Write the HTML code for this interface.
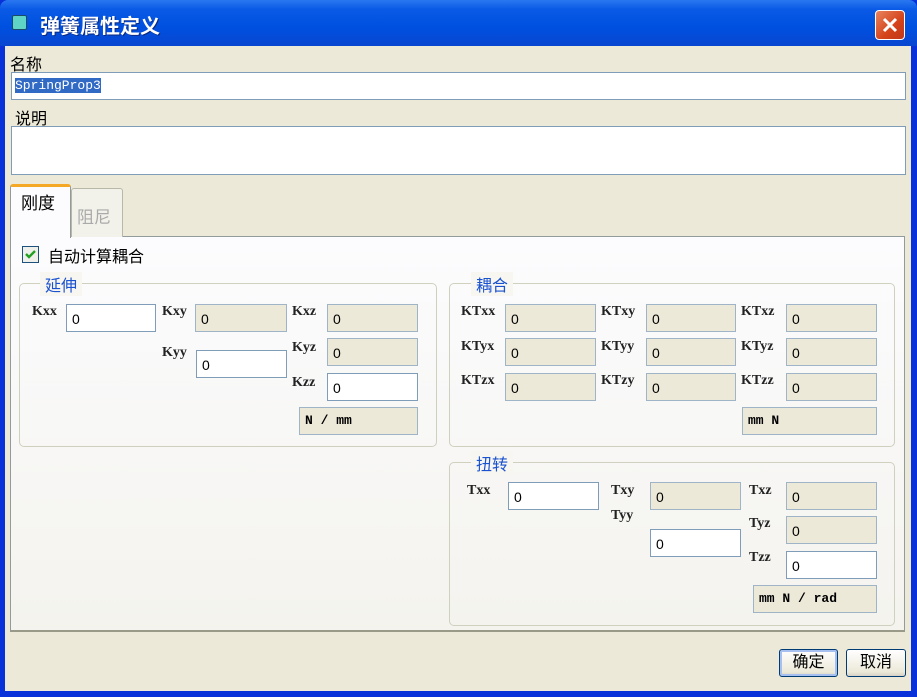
<!DOCTYPE html>
<html><head><meta charset="utf-8"><style>
*{margin:0;padding:0;box-sizing:border-box}
body{width:917px;height:697px;overflow:hidden;background:#0831d9;font-family:"Liberation Sans","Noto Sans CJK SC",sans-serif;position:relative}
.a{position:absolute}
#title{left:0;top:0;width:917px;height:46px;background:linear-gradient(#2a78f0,#0a5ae6 20%,#0050e0 60%,#0846d0);border-radius:8px 8px 0 0}
#client{left:5px;top:46px;width:906px;height:645px;background:#ece9d8}
.lbl{font-size:16px;color:#000}
.in{border:1px solid #7f9db9;background:#fff;font-size:14px;padding-left:5px;padding-top:2px;line-height:25px}
.g{background:#ece9d8;border-color:#a0b4c8}
.kl{font-family:"Liberation Serif",serif;font-weight:bold;font-size:14px;color:#222}
.grp{border:1px solid #d0d0bf;border-radius:5px}
.gt{color:#1a52d0;font-size:16px;background:#f7f6f1;padding:0 5px}
.u{font-family:"Liberation Mono",monospace;font-weight:bold;font-size:13px;border:1px solid #a0b4c8;background:#ece9d8;padding-left:5px;line-height:26px}
.btn{border:1px solid #003c74;border-radius:3px;background:linear-gradient(#fff,#ece9d8 85%,#d6d0c5);font-size:16px;text-align:center;line-height:25px}
</style></head><body>
<div id="title" class="a"></div>
<div class="a" style="left:12px;top:15px;width:15px;height:15px;background:#5fd3c6;border:1px solid #1a4a6a;border-radius:2px"></div>
<div class="a" style="left:40px;top:10px;color:#fff;font-size:20px;font-weight:bold;text-shadow:1px 1px 0 #0a2a80">弹簧属性定义</div>
<div class="a" style="left:875px;top:10px;width:30px;height:30px;border:1px solid #fff;border-radius:4px;background:linear-gradient(135deg,#e8845f,#d4431a 60%,#c0381a)"><svg width="28" height="28"><path d="M8 8L20 20M20 8L8 20" stroke="#fff" stroke-width="3"/></svg></div>
<div id="client" class="a"></div>
<div class="a lbl" style="left:10px;top:51px">名称</div>
<div class="a in" style="left:11px;top:72px;width:895px;height:28px;padding-left:3px;padding-top:0;font-family:'Liberation Mono',monospace;font-size:13px"><span style="background:#316ac5;color:#fff">SpringProp3</span></div>
<div class="a lbl" style="left:15px;top:105px">说明</div>
<div class="a in" style="left:11px;top:126px;width:895px;height:49px"></div>
<div class="a" style="left:10px;top:236px;width:895px;height:396px;background:linear-gradient(#fcfcfe,#f4f3ee);border:1px solid #919b9c;border-bottom:2px solid #9a9a88"></div>
<div class="a" style="left:71px;top:188px;width:52px;height:49px;border:1px solid #b8b8a8;border-bottom:none;border-radius:3px 3px 0 0;background:#f3f2ea;color:#aaa;font-size:17px;padding:14px 0 0 5px">阻尼</div>
<div class="a" style="left:10px;top:184px;width:61px;height:54px;border:1px solid #919b9c;border-top:3px solid #f5a825;border-bottom:none;border-radius:3px 3px 0 0;background:#fcfcfe;font-size:17px;padding:2px 0 0 10px">刚度</div>
<div class="a" style="left:22px;top:246px;width:17px;height:17px;border:1px solid #1c5180;background:#f0f0ea"><svg width="15" height="15"><path d="M3 7l3 3 6-6" stroke="#21a121" stroke-width="2.4" fill="none"/></svg></div>
<div class="a" style="left:48px;top:243px;font-size:16px">自动计算耦合</div>

<div class="a grp" style="left:19px;top:283px;width:418px;height:164px"></div>
<div class="a gt" style="left:40px;top:272px">延伸</div>
<div class="a kl" style="left:32px;top:304px">Kxx</div><div class="a in" style="left:66px;top:304px;width:90px;height:28px">0</div>
<div class="a kl" style="left:162px;top:304px">Kxy</div><div class="a in g" style="left:195px;top:304px;width:92px;height:28px">0</div>
<div class="a kl" style="left:292px;top:304px">Kxz</div><div class="a in g" style="left:327px;top:304px;width:91px;height:28px">0</div>
<div class="a kl" style="left:162px;top:345px">Kyy</div><div class="a in" style="left:196px;top:350px;width:91px;height:28px">0</div>
<div class="a kl" style="left:292px;top:340px">Kyz</div><div class="a in g" style="left:327px;top:338px;width:91px;height:28px">0</div>
<div class="a kl" style="left:292px;top:375px">Kzz</div><div class="a in" style="left:327px;top:373px;width:91px;height:28px">0</div>
<div class="a u" style="left:299px;top:407px;width:119px;height:28px">N / mm</div>

<div class="a grp" style="left:449px;top:283px;width:446px;height:164px"></div>
<div class="a gt" style="left:471px;top:272px">耦合</div>
<div class="a kl" style="left:461px;top:304px">KTxx</div><div class="a in g" style="left:505px;top:304px;width:91px;height:28px">0</div>
<div class="a kl" style="left:601px;top:304px">KTxy</div><div class="a in g" style="left:646px;top:304px;width:90px;height:28px">0</div>
<div class="a kl" style="left:741px;top:304px">KTxz</div><div class="a in g" style="left:786px;top:304px;width:91px;height:28px">0</div>
<div class="a kl" style="left:461px;top:339px">KTyx</div><div class="a in g" style="left:505px;top:338px;width:91px;height:28px">0</div>
<div class="a kl" style="left:601px;top:339px">KTyy</div><div class="a in g" style="left:646px;top:338px;width:90px;height:28px">0</div>
<div class="a kl" style="left:741px;top:339px">KTyz</div><div class="a in g" style="left:786px;top:338px;width:91px;height:28px">0</div>
<div class="a kl" style="left:461px;top:373px">KTzx</div><div class="a in g" style="left:505px;top:373px;width:91px;height:28px">0</div>
<div class="a kl" style="left:601px;top:373px">KTzy</div><div class="a in g" style="left:646px;top:373px;width:90px;height:28px">0</div>
<div class="a kl" style="left:741px;top:373px">KTzz</div><div class="a in g" style="left:786px;top:373px;width:91px;height:28px">0</div>
<div class="a u" style="left:742px;top:407px;width:135px;height:28px">mm N</div>

<div class="a grp" style="left:449px;top:462px;width:446px;height:164px"></div>
<div class="a gt" style="left:471px;top:451px">扭转</div>
<div class="a kl" style="left:467px;top:483px">Txx</div><div class="a in" style="left:508px;top:482px;width:91px;height:28px">0</div>
<div class="a kl" style="left:611px;top:483px">Txy</div><div class="a in g" style="left:650px;top:482px;width:91px;height:28px">0</div>
<div class="a kl" style="left:611px;top:508px">Tyy</div><div class="a in" style="left:650px;top:529px;width:91px;height:28px">0</div>
<div class="a kl" style="left:749px;top:483px">Txz</div><div class="a in g" style="left:786px;top:482px;width:91px;height:28px">0</div>
<div class="a kl" style="left:749px;top:516px">Tyz</div><div class="a in g" style="left:786px;top:516px;width:91px;height:28px">0</div>
<div class="a kl" style="left:749px;top:550px">Tzz</div><div class="a in" style="left:786px;top:551px;width:91px;height:28px">0</div>
<div class="a u" style="left:753px;top:585px;width:124px;height:28px">mm N / rad</div>

<div class="a btn" style="left:779px;top:649px;width:59px;height:28px;box-shadow:inset 0 0 0 2px #a8c0f0">确定</div>
<div class="a btn" style="left:846px;top:649px;width:60px;height:28px">取消</div>
</body></html>
